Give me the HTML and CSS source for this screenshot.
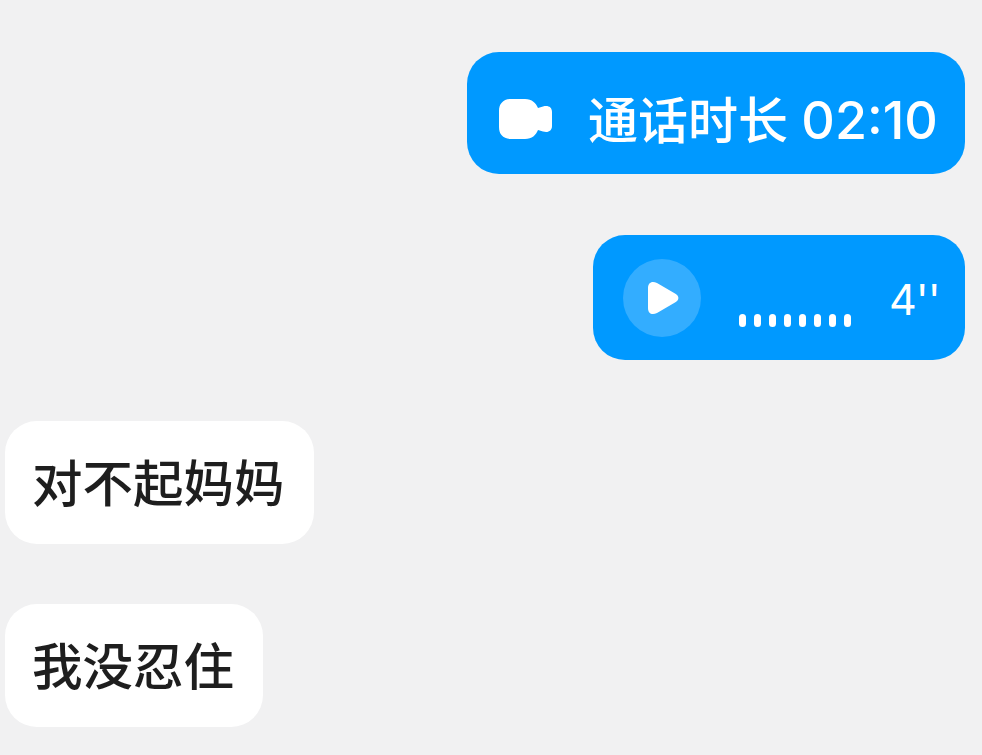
FILE: index.html
```html
<!DOCTYPE html>
<html lang="zh-CN">
<head>
<meta charset="UTF-8" />
<meta name="viewport" content="width=device-width, initial-scale=1.0"/>
<title>聊天记录</title>
<link rel="stylesheet" href="styles.css">
</head>
<body>
<div class="chat">
  <!-- Video call record -->
  <div class="bubble mine call">
    <svg class="call-icon" viewBox="0 0 53 40" width="53" height="40">
      <path d="M12 0H26C33 0 37 4 39 9L44 7.500C49 6 53 8 53 13V27C53 32 49 34 44 32.500L39 31C37 36 33 40 26 40H12C4 40 0 35 0 28V12C0 5 4 0 12 0Z" fill="#fff"/>
    </svg>
    <span class="call-text">通话时长 <span class="num">02:10</span></span>
  </div>

  <!-- Voice message -->
  <div class="bubble mine voice">
    <div class="play">
      <svg viewBox="0 0 32 34" width="32" height="34">
        <path d="M1 7C1 1.500 5 -0.500 10 2L28 12.500C32.500 15 32.500 19 28 21.500L10 32C5 34.500 1 32.500 1 27Z" fill="#fff"/>
      </svg>
    </div>
    <div class="dots">
      <i></i><i></i><i></i><i></i><i></i><i></i><i></i><i></i>
    </div>
    <span class="secs">4''</span>
  </div>

  <div class="bubble theirs">对不起妈妈</div>
  <div class="bubble theirs">我没忍住</div>
</div>
</body>
</html>
```

FILE: styles.css
```css
body {
  margin: 0;
  background: #f1f1f2;
  font-family: "Inter", "Noto Sans CJK SC", sans-serif;
  overflow: hidden;
}
.chat {
  display: flex;
  flex-direction: column;
  gap: 60px;
  padding: 52px 17px 0 5px;
}
.bubble {
  display: flex;
  align-items: center;
  box-sizing: border-box;
  border-radius: 32px;
  font-size: 50px;
  font-weight: 500;
  line-height: 1;
}
.mine {
  align-self: flex-end;
  margin-bottom: 1px;
  background: #0099ff;
  color: #fff;
}
.theirs {
  align-self: flex-start;
  height: 123px;
  padding: 3px 29px 0 27px;
  background: #fff;
  color: #1e1e1e;
  font-size: 50.500px;
}
.call {
  width: 498px;
  height: 122px;
  padding: 12px 0 0 32px;
}
.call-icon {
  margin-right: 36px;
  flex-shrink: 0;
}
.call-text {
  padding-top: 4px;
  white-space: nowrap;
}
.num {
  font-size: 52px;
}
.voice {
  width: 372px;
  height: 125px;
  padding-left: 30px;
}
.play {
  width: 78px;
  height: 78px;
  border-radius: 50%;
  background: #33adff;
  display: flex;
  align-items: center;
  justify-content: center;
  flex-shrink: 0;
}
.play svg {
  margin-left: 1px;
}
.dots {
  display: flex;
  gap: 8px;
  margin: 45px 0 0 38px;
}
.dots i {
  width: 7px;
  height: 13px;
  border-radius: 3.500px;
  background: #fff;
}
.secs {
  font-size: 43px;
  font-weight: 400;
  letter-spacing: -1px;
  margin: 4px 0 0 38px;
}
```
